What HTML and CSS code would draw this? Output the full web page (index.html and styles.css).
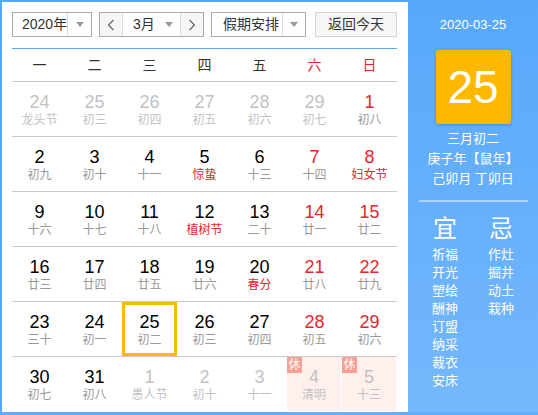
FILE: index.html
```html
<!DOCTYPE html>
<html lang="zh-CN">
<head>
<meta charset="utf-8">
<title>万年历</title>
<link rel="stylesheet" href="styles.css">
</head>
<body>
<div class="cal">
  <div class="main">
    <div class="toolbar">
      <div class="select year">
        <span class="val">2020年</span>
        <span class="drop"><i class="tri"></i></span>
      </div>
      <div class="select month">
        <span class="nav"><svg width="8" height="12" viewBox="0 0 8 12"><polyline points="6.5,1 1.5,6 6.5,11" fill="none" stroke="#666" stroke-width="1.2"/></svg></span>
        <span class="val">3月</span>
        <span class="mdrop"><i class="tri"></i></span>
        <span class="nav nav-r"><svg width="8" height="12" viewBox="0 0 8 12"><polyline points="1.5,1 6.5,6 1.5,11" fill="none" stroke="#666" stroke-width="1.2"/></svg></span>
      </div>
      <div class="select holi">
        <span class="val">假期安排</span>
        <span class="drop"><i class="tri"></i></span>
      </div>
      <div class="today-btn">返回今天</div>
    </div>
    <div class="rule"></div>
    <div class="week">
      <span>一</span><span>二</span><span>三</span><span>四</span><span>五</span><span class="red">六</span><span class="red">日</span>
    </div>
    <div class="row">
      <div class="cell other"><b>24</b><em>龙头节</em></div>
      <div class="cell other"><b>25</b><em>初三</em></div>
      <div class="cell other"><b>26</b><em>初四</em></div>
      <div class="cell other"><b>27</b><em>初五</em></div>
      <div class="cell other"><b>28</b><em>初六</em></div>
      <div class="cell other"><b>29</b><em>初七</em></div>
      <div class="cell we"><b>1</b><em>初八</em></div>
    </div>
    <div class="row">
      <div class="cell"><b>2</b><em>初九</em></div>
      <div class="cell"><b>3</b><em>初十</em></div>
      <div class="cell"><b>4</b><em>十一</em></div>
      <div class="cell"><b>5</b><em class="fest">惊蛰</em></div>
      <div class="cell"><b>6</b><em>十三</em></div>
      <div class="cell we"><b>7</b><em>十四</em></div>
      <div class="cell we"><b>8</b><em class="fest">妇女节</em></div>
    </div>
    <div class="row">
      <div class="cell"><b>9</b><em>十六</em></div>
      <div class="cell"><b>10</b><em>十七</em></div>
      <div class="cell"><b>11</b><em>十八</em></div>
      <div class="cell"><b>12</b><em class="fest">植树节</em></div>
      <div class="cell"><b>13</b><em>二十</em></div>
      <div class="cell we"><b>14</b><em>廿一</em></div>
      <div class="cell we"><b>15</b><em>廿二</em></div>
    </div>
    <div class="row">
      <div class="cell"><b>16</b><em>廿三</em></div>
      <div class="cell"><b>17</b><em>廿四</em></div>
      <div class="cell"><b>18</b><em>廿五</em></div>
      <div class="cell"><b>19</b><em>廿六</em></div>
      <div class="cell"><b>20</b><em class="fest">春分</em></div>
      <div class="cell we"><b>21</b><em>廿八</em></div>
      <div class="cell we"><b>22</b><em>廿九</em></div>
    </div>
    <div class="row">
      <div class="cell"><b>23</b><em>三十</em></div>
      <div class="cell"><b>24</b><em>初一</em></div>
      <div class="cell today"><b>25</b><em>初二</em></div>
      <div class="cell"><b>26</b><em>初三</em></div>
      <div class="cell"><b>27</b><em>初四</em></div>
      <div class="cell we"><b>28</b><em>初五</em></div>
      <div class="cell we"><b>29</b><em>初六</em></div>
    </div>
    <div class="row last">
      <div class="cell"><b>30</b><em>初七</em></div>
      <div class="cell"><b>31</b><em>初八</em></div>
      <div class="cell other"><b>1</b><em>愚人节</em></div>
      <div class="cell other"><b>2</b><em>初十</em></div>
      <div class="cell other"><b>3</b><em>十一</em></div>
      <div class="cell other rest"><span class="badge">休</span><b>4</b><em>清明</em></div>
      <div class="cell other rest"><span class="badge">休</span><b>5</b><em>十三</em></div>
    </div>
  </div>
  <div class="side">
    <div class="date">2020-03-25</div>
    <div class="bigday">25</div>
    <div class="lunar">
      <div>三月初二</div>
      <div>庚子年【鼠年】</div>
      <div>己卯月 丁卯日</div>
    </div>
    <div class="sep"></div>
    <div class="yiji">
      <div class="col">
        <div class="head">宜</div>
        <div>祈福</div><div>开光</div><div>塑绘</div><div>酬神</div><div>订盟</div><div>纳采</div><div>裁衣</div><div>安床</div>
      </div>
      <div class="col">
        <div class="head">忌</div>
        <div>作灶</div><div>掘井</div><div>动土</div><div>栽种</div>
      </div>
    </div>
  </div>
</div>
</body>
</html>
```

FILE: styles.css
```css
* { box-sizing: border-box; margin: 0; padding: 0; }
html, body { width: 538px; height: 415px; overflow: hidden; background: #fff; }
body { font-family: "Liberation Sans", "Noto Sans CJK SC", sans-serif; color: #333; }

.cal {
  width: 538px;
  height: 415px;
  display: flex;
  border-left: 2px solid #58a9fb;
  border-top: 2px solid #58a9fb;
  border-bottom: 3px solid #62aefb;
}

.main {
  width: 406px;
  padding: 10px 0 0 10px;
  background: #fff;
}

.toolbar {
  display: flex;
  height: 25px;
  font-size: 14px;
  color: #333;
  white-space: nowrap;
}

.select {
  display: flex;
  border: 1px solid #aaa;
  background: #fff;
  height: 25px;
}
.select .val {
  line-height: 23px;
  padding-left: 10px;
  white-space: nowrap;
  overflow: hidden;
}
.select .drop {
  border-left: 1px solid #ddd;
  display: flex;
  align-items: center;
  justify-content: center;
}
.tri {
  display: block;
  width: 0;
  height: 0;
  border-left: 4px solid transparent;
  border-right: 4px solid transparent;
  border-top: 5px solid #999;
}

.year { width: 80px; }
.year .val { width: 54px; padding-left: 9px; }
.year .drop { width: 24px; }

.month { width: 105px; margin-left: 7px; }
.month .nav {
  width: 23px;
  background: #f6f6f6;
  border-right: 1px solid #ddd;
  display: flex;
  align-items: center;
  justify-content: center;
}
.month .nav-r { border-right: 0; border-left: 1px solid #ddd; }
.month .val { width: 36px; }
.month .mdrop {
  width: 21px;
  display: flex;
  align-items: center;
  justify-content: flex-start;
  padding-left: 6px;
}

.holi { width: 95px; margin-left: 7px; }
.holi .val { width: 70px; padding-left: 11px; }
.holi .drop { width: 23px; }

.today-btn {
  width: 82px;
  margin-left: 9px;
  height: 25px;
  border: 1px solid #d4d4d4;
  background: #f6f6f6;
  text-align: center;
  line-height: 23px;
}

.rule {
  width: 385px;
  height: 1px;
  background: #5aa9f8;
  margin-top: 11px;
}

.week {
  width: 385px;
  height: 33px;
  display: grid;
  grid-template-columns: repeat(7, 55px);
  border-bottom: 1px solid #c9c9c9;
  font-size: 14px;
  line-height: 32px;
  text-align: center;
  color: #333;
}
.week .red { color: #e5262c; }

.row {
  width: 385px;
  height: 55px;
  display: grid;
  grid-template-columns: repeat(7, 55px);
  border-bottom: 1px solid #c9c9c9;
}
.row.last { border-bottom: 0; height: 54px; }

.cell {
  position: relative;
  height: 54px;
  padding-top: 10px;
  text-align: center;
}
.cell b {
  display: block;
  font-weight: normal;
  font-size: 18px;
  line-height: 20px;
  color: #000;
}
.cell em {
  display: block;
  font-style: normal;
  font-size: 12px;
  line-height: 16px;
  color: #999;
}
.cell.we b { color: #e5262c; }
.cell em.fest { color: #e5262c; }
.cell.other b, .cell.other em { color: #c2c2c2; }

.cell.today {
  border: 3px solid #ffb800;
  padding-top: 7px;
}

.cell.rest {
  background: #fff0ee;
  border-right: 1px solid #fff;
}
.badge {
  position: absolute;
  left: 0;
  top: 0;
  width: 15px;
  height: 16px;
  background: #f9a094;
  color: #fff;
  font-size: 12px;
  line-height: 16px;
  text-align: center;
}

.side {
  width: 130px;
  background: linear-gradient(#57a8fb, #75b8fc);
  color: #fff;
  display: flex;
  flex-direction: column;
  align-items: center;
  padding-top: 13px;
}
.date {
  font-size: 13px;
  line-height: 20px;
}
.bigday {
  margin-top: 15px;
  width: 75px;
  height: 74px;
  background: #ffb800;
  border-radius: 3px;
  box-shadow: 0 1px 3px rgba(0,0,0,0.2);
  font-size: 46px;
  line-height: 74px;
  text-align: center;
  color: #fff;
}
.lunar {
  margin-top: 5px;
  font-size: 13px;
  line-height: 20px;
  text-align: center;
}
.sep {
  margin-top: 11px;
  width: 109px;
  height: 2px;
  background: rgba(255,255,255,0.45);
}
.yiji {
  display: grid;
  grid-template-columns: 56px 56px;
  margin-top: 12px;
  font-size: 13px;
  line-height: 18px;
  text-align: center;
}
.yiji .head {
  font-size: 24px;
  line-height: 30px;
  margin-bottom: 2px;
}
```
